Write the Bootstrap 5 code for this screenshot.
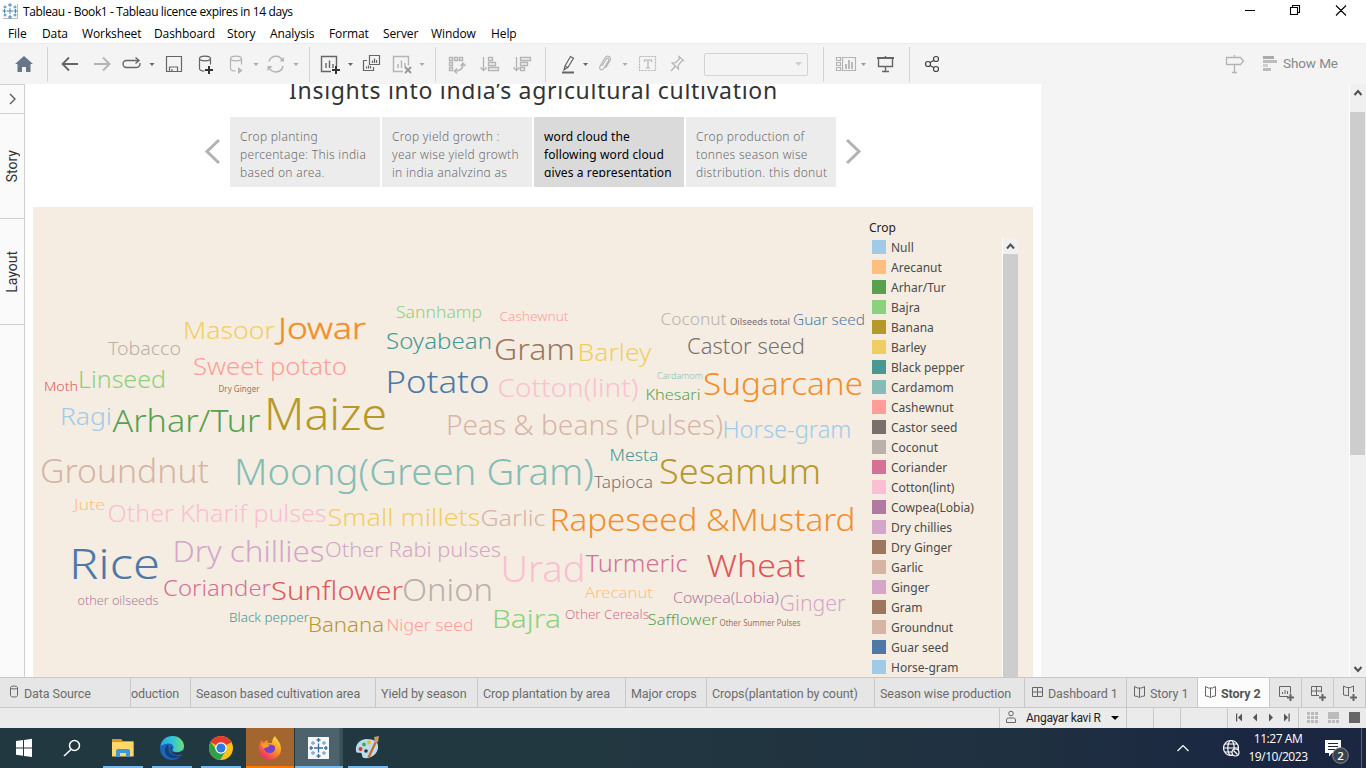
<!DOCTYPE html>
<html lang="en">
<head>
<meta charset="utf-8">
<meta name="viewport" content="width=device-width, initial-scale=1">
<title>Tableau - Book1</title>
<link href="https://cdn.jsdelivr.net/npm/bootstrap@5.3.0/dist/css/bootstrap.min.css" rel="stylesheet">
<style>
html,body{height:100%}
body{width:1366px;height:768px;overflow:hidden;background:#fff;color:#000;font-family:"Open Sans","Noto Sans",sans-serif;font-size:12px;line-height:1}
svg{display:block;flex:none}
button{font:inherit;color:inherit}
.titlebar{height:24px;letter-spacing:-.37px}
.menubar{height:19px;letter-spacing:-.1px}
.menubar a{color:#000;text-decoration:none;display:block;white-space:nowrap}
.toolbar{height:41px;background:#f4f4f4;border-top:1px solid #ececec}
.toolbar button,.taskbar button{background:none;border:0;padding:0}
.toolbar svg{height:40px;fill:none;stroke:#666;stroke-width:1.2}
.toolbar svg.off{stroke:#b4b4b4}
.toolbar .rule{width:1px;height:35px;background:#d4d4d4}
.picker{width:104px;height:23px;border:1px solid #d4d4d4;border-radius:2px;margin:0 15px 0 13px}
.ui{font-family:Roboto,sans-serif}
.workspace{height:593px;background:#f4f4f4}
.rail{width:25px;background:#fafafa;border-right:1px solid #d0d0d0;border-top:1px solid #d0d0d0;font-family:Roboto,sans-serif;font-size:14px;color:#333}
.rail>div{border-bottom:1px solid #d0d0d0}
.rail span{writing-mode:vertical-rl;transform:rotate(180deg)}
.sheet{width:1016px;background:#fff;font-family:"Noto Sans",sans-serif}
.story-title{height:33px;overflow:hidden;font-size:23px;color:#333;font-weight:400;white-space:nowrap}
.story-title div{margin-top:-9px;line-height:30px;letter-spacing:.7px}
.points{height:70px}
.point{width:150px;height:70px;background:#ececec;padding:11px 0 0 10px;margin-right:2px;color:#6c6c6c;font-size:12px;font-weight:300}
.point.on{background:#dadada;color:#000;font-weight:400}
.point div{height:49px;overflow:hidden;line-height:18px;white-space:nowrap;letter-spacing:.3px}
.point.on div{letter-spacing:.1px}
.dash{width:1000px;height:470px;background:#f5ede2;margin:20px 0 0 8px}
.cloud{font-family:"Noto Sans",sans-serif;font-weight:300}
.legend{width:133px;padding-top:12px;color:#4a4a4a;font-size:12px}
.legend h6{font-size:12px;color:#222;margin:0 0 1px;line-height:18px;font-weight:400}
.legend li{height:20px;white-space:nowrap;display:flex;align-items:center}
.legend i{width:14px;height:14px;margin:-2px 5px 0 3px}
.scroller{width:16px;background:#cdcdcd;border-left:1px solid #fff}
.scroller div{background:#f0f0f0}
.vscroll{width:17px;background:#f0f0f0;border-left:1px solid #fff}
.vscroll .thumb{height:343px;background:#cdcdcd;width:15px}
.sheet-tabs{height:31px;background:#e6e6e6;border-top:1px solid #c8c8c8;border-bottom:1px solid #c8c8c8;color:#6c6c6c;font-family:Roboto,sans-serif;font-size:12.5px;letter-spacing:-.08px}
.sheet-tabs>.tab{border-right:1px solid #c8c8c8;height:29px;line-height:31px;color:#6c6c6c;text-decoration:none;white-space:nowrap;overflow:hidden;display:flex;flex:none}
.sheet-tabs>.wks{padding-left:5px}
.sheet-tabs>.on{background:#fcfcfc;font-weight:700;color:#555}
.statusbar{height:20px;background:#ebebeb;font-family:Roboto,sans-serif;color:#222;letter-spacing:-.27px}
.statusbar>div{border-left:1px solid #c8c8c8;height:20px;flex:none}
.taskbar{height:40px;background:linear-gradient(90deg,#223840 0,#223840 40%,#1f3040 75%,#1b2742 92%,#1b2640);color:#fff}
.taskbar button{height:40px;flex:none}
.open{border-bottom:2px solid #76b9ed!important}
</style>
</head>
<body class="d-flex flex-column">
<header>
 <div class="titlebar d-flex align-items-center">
  <svg width="23" height="24" viewBox="0 0 23 24"><path d="M3 18.500H17.500V4" fill="none" stroke="#bbb"/><path d="M10 3v4M8 5h4M10 8v6M7 11h6M10 15v4M8 17h4M2.500 11h4M4.500 9v4M13.500 11h4M15.500 9v4M5 5.500v3M3.500 7h3M15 5.500v3M13.500 7h3M5 13.500v3M3.500 15h3M15 13.500v3M13.500 15h3" stroke="#3f87b5" fill="none"/></svg>
  <span class="flex-grow-1">Tableau - Book1 - Tableau licence expires in 14 days</span>
  <svg width="136" height="24" viewBox="1230 0 136 24" fill="none" stroke="#000" stroke-width="1.100"><path d="M1245 10.500h10M1290.500 7.500h7v7h-7zM1292.500 7v-1.500h7v7h-1.500M1336 5.500l10 10M1346 5.500l-10 10"/></svg>
 </div>
 <nav class="menubar d-flex align-items-center ps-2">
  <a style="width:34px">File</a><a style="width:40px">Data</a><a style="width:72px">Worksheet</a><a style="width:73px">Dashboard</a><a style="width:43px">Story</a><a style="width:59px">Analysis</a><a style="width:54px">Format</a><a style="width:48px">Server</a><a style="width:60px">Window</a><a>Help</a>
 </nav>
</header>
<div class="toolbar d-flex align-items-center">
 <button><svg width="47" viewBox="0 44 47 40"><path d="M24 56l9 8h-2.500v8h-4.500v-5h-4v5h-4.500v-8H15z" fill="#66758a" stroke="none"/></svg></button>
 <div class="rule"></div>
 <button><svg width="38" viewBox="48 44 38 40"><path d="M78 64H63M69 57.500L62.500 64l6.500 6.500" stroke-width="1.800"/></svg></button>
 <button><svg class="off" width="32" viewBox="86 44 32 40"><path d="M94 64h15M103 57.500l6.500 6.500-6.500 6.500" stroke-width="1.800"/></svg></button>
 <button><svg width="44" viewBox="118 44 44 40"><path d="M134 60.500h-7.500a3.500 3.500 0 000 7h10a3.500 3.500 0 003.300-4.500M131 60.500h7.500M135.500 57.500l3.500 3-3.500 3" stroke-width="1.400"/><path d="M149.500 63h5l-2.500 3z" fill="#666" stroke="none"/></svg></button>
 <button><svg width="28" viewBox="162 44 28 40"><path d="M166.500 56.500h15v15h-15zM169.500 71.500v-4.500h8v4.500M172 71v-2"/></svg></button>
 <button><svg width="32" viewBox="190 44 32 40"><ellipse cx="205" cy="58.500" rx="5.500" ry="2.300"/><path d="M199.500 58.500v10c0 1.500 2 2.500 5 2.500M210.500 58.500v6"/><path d="M205 70h8M209 66v8" stroke="#333" stroke-width="2"/></svg></button>
 <button><svg class="off" width="42" viewBox="222 44 42 40"><ellipse cx="236" cy="58.500" rx="5.500" ry="2.300"/><path d="M230.500 58.500v10c0 1.500 2 2.500 5 2.500M241.500 58.500v6"/><path d="M238 67l4.500 3.500-4.500 3.500z" fill="#b4b4b4" stroke="none"/><path d="M253.500 63h5l-2.500 3z" fill="#aaa" stroke="none"/></svg></button>
 <button><svg class="off" width="45" viewBox="264 44 45 40"><path d="M269 61.500a7.200 7.200 0 0113.500-1M283 66a7.200 7.200 0 01-13.500 2" stroke-width="1.500"/><path d="M284 57v4.500h-4.500zM267.500 71v-5h5z" fill="#b4b4b4" stroke="none"/><path d="M293.500 63h5l-2.500 3z" fill="#aaa" stroke="none"/></svg></button>
 <div class="rule"></div>
 <button><svg width="46" viewBox="310 44 46 40"><path d="M331 71.500h-9.500v-15h15v10M326 63v5M329.500 60.500v7.500M333 64v4" stroke-width="1.400"/><path d="M332 70h8M336 66v8" stroke="#333" stroke-width="2"/><path d="M348 63h5l-2.500 3z" fill="#666" stroke="none"/></svg></button>
 <button><svg width="31" viewBox="356 44 31 40"><path d="M369.500 55.500h10v9h-10zM367 60.500h-3.500v10h10v-3.500M372.500 63v-2.500M374.500 63v-4.500M376.500 63v-3M366.500 68.500v-2M368.500 68.500v-3M370.500 68.500v-2.500"/></svg></button>
 <button><svg class="off" width="48" viewBox="387 44 48 40"><path d="M403 71.500h-9.500v-15h15v9M398 64v4M401.500 60.500v7.500M405 63v4" stroke-width="1.400"/><path d="M405 67l6 6M411 67l-6 6" stroke="#999" stroke-width="2"/><path d="M419.500 63h5l-2.500 3z" fill="#aaa" stroke="none"/></svg></button>
 <div class="rule"></div>
 <button><svg class="off" width="38" viewBox="436 44 38 40"><path d="M449.500 57.500h3v3h-3zM454.500 57.500h3v3h-3zM459.500 57.500h3v3h-3zM449.500 62.500h3v3h-3zM449.500 67.500h3v3h-3zM463 63.500c.5 5-3 7.500-8 7.500M460.500 66l2.500-3 2.500 3M457 68.500l-2.500 2.500 2.500 2.500" stroke-width="1.400"/></svg></button>
 <button><svg class="off" width="32" viewBox="474 44 32 40"><path d="M483.500 57v13M480.500 67.500l3 3 3-3M488.500 57.500h4v3h-4zM488.500 62.500h7v3h-7zM488.500 67.500h10v3h-10z" stroke-width="1.300"/></svg></button>
 <button><svg class="off" width="39" viewBox="506 44 39 40"><path d="M516.500 57v13M513.500 67.500l3 3 3-3M520.500 57.500h10v3h-10zM520.500 62.500h7v3h-7zM520.500 67.500h4v3h-4z" stroke-width="1.300"/></svg></button>
 <div class="rule"></div>
 <button><svg width="46" viewBox="546 44 46 40"><path d="M562 72.500h12" stroke-width="2"/><path d="M564 70l1-4 5.500-9.500 3 1.800-5.500 9zM565 66l3 1.800"/><path d="M583 63h5l-2.500 3z" fill="#666" stroke="none"/></svg></button>
 <button><svg class="off" width="40" viewBox="592 44 40 40"><path d="M602 66l4-6.500c1.300-2 3.700-.7 2.600 1.300l-4.800 7.700c-1.700 2.500-5.300.7-3.900-2l5-8.500c2.300-3.500 7-1 5.200 2.500l-4.600 7.500"/><path d="M622.500 63h5l-2.500 3z" fill="#aaa" stroke="none"/></svg></button>
 <button><svg class="off" width="32" viewBox="632 44 32 40"><path d="M639.500 56.500h16v14h-16z" stroke-dasharray="2 1"/><path d="M644.500 62v-2h7v2M648 60v8M646 68h4"/></svg></button>
 <button><svg class="off" width="27" viewBox="664 44 27 40"><path d="M679 56.500l4.500 4-2 .8-3.300 4 .3 3.700-6.500-6 3.700-.3 3.500-3.700zM675 66.500l-4 4.500"/></svg></button>
 <div class="picker d-flex align-items-center justify-content-end pe-1"><svg width="9" style="height:8px" viewBox="0 0 9 8"><path d="M1 2h7L4.500 6z" fill="#d0d0d0" stroke="none"/></svg></div>
 <div class="rule"></div>
 <button><svg class="off" width="46" viewBox="824 44 46 40"><path d="M836.500 57.500h4v3h-4zM836.500 62.500h4v3h-4zM836.500 67.500h4v3h-4zM842.500 57.500h13v13h-13z"/><path d="M846 69v-5M849 69v-9M852 69v-7" stroke-width="1.800"/><path d="M861 63h5l-2.500 3z" fill="#999" stroke="none"/></svg></button>
 <button><svg width="39" viewBox="870 44 39 40"><path d="M877 58h17" stroke-width="2"/><path d="M878.500 59v7.500h14v-7.500M885.500 56v2M885.500 67v4.500M882 71.500h7" stroke-width="1.400"/></svg></button>
 <div class="rule"></div>
 <button><svg width="46" viewBox="910 44 46 40"><g stroke="#444"><circle cx="928" cy="64" r="2.500"/><circle cx="936" cy="59" r="2.500"/><circle cx="936" cy="69" r="2.500"/><path d="M930 62.500l4-2.300M930 65.500l4 2.300"/></g></svg></button>
 <button class="ms-auto"><svg class="off" width="40" viewBox="1215 44 40 40"><path d="M1226.500 57.500h14l3 3.500-3 3.500h-14zM1234.500 55v2.500M1234.500 64.500v8M1232 72.500h5" stroke-width="1.300"/></svg></button>
 <button class="ui d-flex align-items-center" style="width:111px;font-size:13.500px;color:#888;letter-spacing:-.1px"><svg width="28" viewBox="1255 44 28 40"><path d="M1263 56h11v3h-11z" fill="#aaa" stroke="none"/><path d="M1263 60h14v3h-14zM1263 68h8v3h-8z" fill="#bcbcbc" stroke="none"/><path d="M1263 64h5v3h-5z" fill="#d0d0d0" stroke="none"/></svg>Show Me</button>
</div>

<main class="workspace d-flex">
 <aside class="rail d-flex flex-column">
  <div style="height:29px"><svg width="24" height="28"><path d="M10 9l5 5-5 5" fill="none" stroke="#555" stroke-width="1.300"/></svg></div>
  <div class="d-flex align-items-center justify-content-center" style="height:105px"><span>Story</span></div>
  <div class="d-flex align-items-center justify-content-center" style="height:106px"><span>Layout</span></div>
 </aside>
 <section class="sheet">
  <div class="story-title"><div style="margin-left:264px">Insights into india’s agricultural cultivation</div></div>
  <div class="points d-flex" style="margin-left:175px">
   <svg width="30" height="70" viewBox="200 117 30 70" fill="none" stroke="#b2b2b2" stroke-width="3"><path d="M219 140l-12 11.500 12 11.500"/></svg>
   <div class="point"><div>Crop planting<br>percentage: This india<br>based on area.</div></div>
   <div class="point"><div>Crop yield growth :<br>year wise yield growth<br>in india analyzing as</div></div>
   <div class="point on"><div>word cloud the<br>following word cloud<br>gives a representation</div></div>
   <div class="point"><div>Crop production of<br>tonnes season wise<br>distribution. this donut</div></div>
   <svg width="28" height="70" viewBox="838 117 28 70" fill="none" stroke="#b2b2b2" stroke-width="3"><path d="M847 140l12 11.500-12 11.500"/></svg>
  </div>
  <div class="dash d-flex">
   <svg class="cloud" width="836" height="470" viewBox="33 207 836 470">
    <text x="183" y="339" font-size="24" textLength="92" lengthAdjust="spacingAndGlyphs" fill="#f1ce63">Masoor</text>
    <text x="278" y="339" font-size="30" textLength="88" lengthAdjust="spacingAndGlyphs" fill="#f28e2b" stroke="#f28e2b" stroke-width=".4">Jowar</text>
    <text x="108" y="355" font-size="17.500" textLength="73" lengthAdjust="spacingAndGlyphs" fill="#bab0ac">Tobacco</text>
    <text x="193" y="375" font-size="23" textLength="154" lengthAdjust="spacingAndGlyphs" fill="#ff9d9a">Sweet potato</text>
    <text x="78" y="388" font-size="23" textLength="88" lengthAdjust="spacingAndGlyphs" fill="#8cd17d">Linseed</text>
    <text x="44" y="391" font-size="12.500" textLength="34" lengthAdjust="spacingAndGlyphs" fill="#e15759">Moth</text>
    <text x="218.500" y="392" font-size="8.500" textLength="41" lengthAdjust="spacingAndGlyphs" fill="#9d7660" font-weight="400">Dry Ginger</text>
    <text x="60" y="425" font-size="23.500" textLength="52" lengthAdjust="spacingAndGlyphs" fill="#a0cbe8">Ragi</text>
    <text x="112.500" y="432" font-size="32" textLength="148" lengthAdjust="spacingAndGlyphs" fill="#59a14f">Arhar/Tur</text>
    <text x="264" y="430" font-size="43.500" textLength="123" lengthAdjust="spacingAndGlyphs" fill="#b6992d">Maize</text>
    <text x="40" y="483" font-size="33" textLength="169" lengthAdjust="spacingAndGlyphs" fill="#d7b5a6">Groundnut</text>
    <text x="234" y="485" font-size="37" textLength="360" lengthAdjust="spacingAndGlyphs" fill="#86bcb6">Moong(Green Gram)</text>
    <text x="74" y="510" font-size="15" textLength="31" lengthAdjust="spacingAndGlyphs" fill="#ffbe7d">Jute</text>
    <text x="107.500" y="522" font-size="23.500" textLength="219" lengthAdjust="spacingAndGlyphs" fill="#fabfd2">Other Kharif pulses</text>
    <text x="327.500" y="526" font-size="24" textLength="153" lengthAdjust="spacingAndGlyphs" fill="#f1ce63">Small millets</text>
    <text x="69" y="578.500" font-size="43" textLength="91" lengthAdjust="spacingAndGlyphs" fill="#4e79a7">Rice</text>
    <text x="172.500" y="562" font-size="29" textLength="152" lengthAdjust="spacingAndGlyphs" fill="#d4a6c8">Dry chillies</text>
    <text x="325" y="557" font-size="20.500" textLength="176" lengthAdjust="spacingAndGlyphs" fill="#d4a6c8">Other Rabi pulses</text>
    <text x="163" y="596" font-size="22" textLength="108" lengthAdjust="spacingAndGlyphs" fill="#d37295">Coriander</text>
    <text x="271" y="600" font-size="26" textLength="132" lengthAdjust="spacingAndGlyphs" fill="#e15759">Sunflower</text>
    <text x="402" y="601" font-size="31" textLength="91" lengthAdjust="spacingAndGlyphs" fill="#bab0ac">Onion</text>
    <text x="77.500" y="605" font-size="12" textLength="81" lengthAdjust="spacingAndGlyphs" fill="#b07aa1">other oilseeds</text>
    <text x="229" y="622" font-size="12.500" textLength="80" lengthAdjust="spacingAndGlyphs" fill="#499894">Black pepper</text>
    <text x="308" y="632" font-size="20.500" textLength="76" lengthAdjust="spacingAndGlyphs" fill="#b6992d">Banana</text>
    <text x="386.500" y="631" font-size="16.500" textLength="87" lengthAdjust="spacingAndGlyphs" fill="#ff9d9a">Niger seed</text>
    <text x="396" y="318" font-size="16" textLength="86" lengthAdjust="spacingAndGlyphs" fill="#8cd17d">Sannhamp</text>
    <text x="386" y="349" font-size="22" textLength="106" lengthAdjust="spacingAndGlyphs" fill="#499894">Soyabean</text>
    <text x="385.500" y="392.500" font-size="31" textLength="104" lengthAdjust="spacingAndGlyphs" fill="#4e79a7">Potato</text>
    <text x="499.500" y="321" font-size="12.500" textLength="69" lengthAdjust="spacingAndGlyphs" fill="#ff9d9a">Cashewnut</text>
    <text x="494" y="360" font-size="30" textLength="81" lengthAdjust="spacingAndGlyphs" fill="#9d7660">Gram</text>
    <text x="577.500" y="361" font-size="23" textLength="74" lengthAdjust="spacingAndGlyphs" fill="#f1ce63">Barley</text>
    <text x="497.500" y="397" font-size="25" textLength="141" lengthAdjust="spacingAndGlyphs" fill="#fabfd2">Cotton(lint)</text>
    <text x="660.500" y="325" font-size="16" textLength="66" lengthAdjust="spacingAndGlyphs" fill="#bab0ac">Coconut</text>
    <text x="730" y="325" font-size="9" textLength="60" lengthAdjust="spacingAndGlyphs" fill="#79706e" font-weight="400">Oilseeds total</text>
    <text x="793" y="325" font-size="15" textLength="72" lengthAdjust="spacingAndGlyphs" fill="#4e79a7">Guar seed</text>
    <text x="687" y="354" font-size="21.500" textLength="118" lengthAdjust="spacingAndGlyphs" fill="#79706e">Castor seed</text>
    <text x="657" y="379" font-size="9.500" textLength="46" lengthAdjust="spacingAndGlyphs" fill="#86bcb6">Cardamom</text>
    <text x="645.500" y="400" font-size="15" textLength="55" lengthAdjust="spacingAndGlyphs" fill="#59a14f">Khesari</text>
    <text x="703" y="395" font-size="31.500" textLength="160" lengthAdjust="spacingAndGlyphs" fill="#f28e2b">Sugarcane</text>
    <text x="446" y="435" font-size="27" textLength="277" lengthAdjust="spacingAndGlyphs" fill="#d7b5a6">Peas &amp; beans (Pulses)</text>
    <text x="722.500" y="438" font-size="23" textLength="129" lengthAdjust="spacingAndGlyphs" fill="#a0cbe8">Horse-gram</text>
    <text x="609.500" y="461" font-size="15.500" textLength="49" lengthAdjust="spacingAndGlyphs" fill="#499894">Mesta</text>
    <text x="594" y="488" font-size="15.500" textLength="59" lengthAdjust="spacingAndGlyphs" fill="#79706e">Tapioca</text>
    <text x="659" y="484" font-size="34" textLength="162" lengthAdjust="spacingAndGlyphs" fill="#b6992d">Sesamum</text>
    <text x="480.500" y="526" font-size="22" textLength="65" lengthAdjust="spacingAndGlyphs" fill="#d7b5a6">Garlic</text>
    <text x="549.500" y="531" font-size="32" textLength="306" lengthAdjust="spacingAndGlyphs" fill="#f28e2b">Rapeseed &amp;Mustard</text>
    <text x="500.500" y="581.500" font-size="37" textLength="85" lengthAdjust="spacingAndGlyphs" fill="#fabfd2">Urad</text>
    <text x="585.500" y="572" font-size="23" textLength="102" lengthAdjust="spacingAndGlyphs" fill="#d37295">Turmeric</text>
    <text x="706.500" y="577" font-size="31.500" textLength="99" lengthAdjust="spacingAndGlyphs" fill="#e15759">Wheat</text>
    <text x="585" y="598" font-size="15" textLength="68" lengthAdjust="spacingAndGlyphs" fill="#ffbe7d">Arecanut</text>
    <text x="673" y="603" font-size="14.500" textLength="106" lengthAdjust="spacingAndGlyphs" fill="#b07aa1">Cowpea(Lobia)</text>
    <text x="779.500" y="611" font-size="21" textLength="66" lengthAdjust="spacingAndGlyphs" fill="#d4a6c8">Ginger</text>
    <text x="492" y="628" font-size="26.500" textLength="69" lengthAdjust="spacingAndGlyphs" fill="#8cd17d">Bajra</text>
    <text x="565" y="619" font-size="12.500" textLength="84" lengthAdjust="spacingAndGlyphs" fill="#d37295">Other Cereals</text>
    <text x="647.500" y="625" font-size="14.500" textLength="70" lengthAdjust="spacingAndGlyphs" fill="#59a14f">Safflower</text>
    <text x="719.500" y="626" font-size="8.300" textLength="81" lengthAdjust="spacingAndGlyphs" fill="#9d7660" font-weight="400">Other Summer Pulses</text>
   </svg>
   <div class="legend overflow-hidden">
    <h6>Crop</h6>
    <ul class="list-unstyled m-0">
     <li><i style="background:#a0cbe8"></i>Null</li><li><i style="background:#ffbe7d"></i>Arecanut</li><li><i style="background:#59a14f"></i>Arhar/Tur</li><li><i style="background:#8cd17d"></i>Bajra</li><li><i style="background:#b6992d"></i>Banana</li><li><i style="background:#f1ce63"></i>Barley</li><li><i style="background:#499894"></i>Black pepper</li><li><i style="background:#86bcb6"></i>Cardamom</li><li><i style="background:#ff9d9a"></i>Cashewnut</li><li><i style="background:#79706e"></i>Castor seed</li><li><i style="background:#bab0ac"></i>Coconut</li><li><i style="background:#d37295"></i>Coriander</li><li><i style="background:#fabfd2"></i>Cotton(lint)</li><li><i style="background:#b07aa1"></i>Cowpea(Lobia)</li><li><i style="background:#d4a6c8"></i>Dry chillies</li><li><i style="background:#9d7660"></i>Dry Ginger</li><li><i style="background:#d7b5a6"></i>Garlic</li><li><i style="background:#d4a6c8"></i>Ginger</li><li><i style="background:#9d7660"></i>Gram</li><li><i style="background:#d7b5a6"></i>Groundnut</li><li><i style="background:#4e79a7"></i>Guar seed</li><li><i style="background:#a0cbe8"></i>Horse-gram</li>
    </ul>
   </div>
   <div class="scroller" style="margin-top:31px"><div><svg width="15" height="16"><path d="M4 10.500l3.500-4 3.500 4" fill="none" stroke="#505050" stroke-width="2"/></svg></div></div>
  </div>
 </section>
 <div class="vscroll ms-auto d-flex flex-column">
  <svg width="16" height="28"><path d="M4.500 11l3.500-4 3.500 4" fill="none" stroke="#505050" stroke-width="2"/></svg>
  <div class="thumb"></div>
  <svg class="mt-auto" width="16" height="17"><path d="M4.500 7l3.500 4 3.500-4" fill="none" stroke="#505050" stroke-width="2"/></svg>
 </div>
</main>

<nav class="sheet-tabs d-flex">
 <a class="tab" style="width:131px"><svg width="24" height="29" viewBox="0 678 24 29" fill="none" stroke="#666"><ellipse cx="14" cy="687.500" rx="3.500" ry="1.500"/><path d="M10.500 687.500v8c0 2 7 2 7 0v-8"/></svg>Data Source</a>
 <a class="tab" style="width:60px">oduction</a>
 <a class="tab wks" style="width:185px">Season based cultivation area</a>
 <a class="tab wks" style="width:102px">Yield by season</a>
 <a class="tab wks" style="width:148px">Crop plantation by area</a>
 <a class="tab wks" style="width:81px">Major crops</a>
 <a class="tab wks" style="width:168px">Crops(plantation by count)</a>
 <a class="tab wks" style="width:150px">Season wise production</a>
 <a class="tab" style="width:102px"><svg width="23" height="29" viewBox="1025 678 23 29" fill="none" stroke="#666"><path d="M1032.500 687.500h10v9h-10zM1037.500 687.500v9M1032.500 692h10"/></svg>Dashboard 1</a>
 <a class="tab" style="width:71px"><svg width="23" height="29" viewBox="1127 678 23 29" fill="none" stroke="#666"><path id="book" d="M1134.500 686.500l3 1.500h4l3-1.500v9.500l-3.500.500-1.500 1.500-1.500-1.500-3.500-.500zM1139.500 688v9"/></svg>Story 1</a>
 <a class="tab on" style="width:72px"><svg width="23" height="29" viewBox="1127 678 23 29" fill="none" stroke="#666"><use href="#book"/></svg>Story 2</a>
 <a class="tab" style="width:32px"><svg width="31" height="29" viewBox="1270 678 31 29" fill="none" stroke="#666"><path d="M1288 696.500h-8.500v-10h11v7M1282.500 694v-2M1285 694v-4M1287.500 694v-3"/><path d="M1287 697.500h7M1290.500 694v7" stroke-width="2"/></svg></a>
 <a class="tab" style="width:32px"><svg width="31" height="29" viewBox="1302 678 31 29" fill="none" stroke="#666"><path d="M1319 695.500h-7.500v-9h10v6M1316.500 686.500v9M1311.500 691h10"/><path d="M1319 697.500h7M1322.500 694v7" stroke-width="2"/></svg></a>
 <a class="tab" style="width:32px"><svg width="31" height="29" viewBox="1334 678 31 29" fill="none" stroke="#666"><path d="M1349 696l-1.500-.5-4-.5v-9l3 1.500h4l3-1.500v6M1348.500 688v8"/><path d="M1350 697.500h7M1353.500 694v7" stroke-width="2"/></svg></a>
</nav>
<div class="statusbar d-flex">
 <div class="ms-auto d-flex align-items-center" style="width:127px"><svg width="26" height="20" viewBox="1000 708 26 20" fill="none" stroke="#666"><circle cx="1011" cy="713.500" r="2.300"/><path d="M1006.500 722.500v-2.500q0-2 2-2h5q2 0 2 2v2.500z"/></svg>Angayar kavi R<svg class="ms-auto me-1" width="14" height="20" viewBox="0 0 14 20"><path d="M3 8h8l-4 4z"/></svg></div>
 <div style="width:27px"></div><div style="width:27px"></div><div style="width:47px"></div>
 <div style="width:71px"><svg width="70" height="20" viewBox="1228 708 70 20" fill="#555"><path d="M1236 713.500h1.200v8h-1.200zM1242 713.500v8l-4-4zM1257 713.500v8l-4-4zM1269 713.500v8l4-4zM1284 713.500v8l4-4zM1288.500 713.500h1.200v8h-1.200z"/></svg></div>
 <div style="width:68px"><svg width="67" height="20" viewBox="1299 708 67 20" fill="#bbb"><path d="M1307 712h3v3h-3zM1311 712h3v3h-3zM1315 712h3v3h-3zM1307 716h3v3h-3zM1311 716h3v3h-3zM1315 716h3v3h-3zM1307 720h3v3h-3zM1311 720h3v3h-3zM1315 720h3v3h-3zM1328 712h11v7h-11zM1328 720h3v3h-3zM1332 720h3v3h-3zM1336 720h3v3h-3z"/><path d="M1349 712h11v11h-11z" fill="#666"/></svg></div>
</div>
<footer class="taskbar d-flex">
 <button><svg width="48" height="40" viewBox="0 728 48 40" fill="#fff"><path d="M16 741l7-1v7.500h-7zM24 739.900l8-1.100v8.700h-8zM16 748.500h7v7.300l-7-1zM24 748.500h8v8.500l-8-1.100z"/></svg></button>
 <button><svg width="55" height="40" viewBox="48 728 55 40" fill="none" stroke="#fff" stroke-width="1.500"><circle cx="74.500" cy="745.500" r="5"/><path d="M71 749.500l-7 6.500"/></svg></button>
 <button class="open"><svg width="40" height="38" viewBox="103 728 40 38"><path d="M112 739h9l2 2h10.500v15H112z" fill="#d79b15"/><path d="M112 742h21.500v14.500H112z" fill="#ffd868"/><path d="M116 757v-6q0-2 2-2h10q2 0 2 2v6h-4v-4h-6v4z" fill="#3d97d8"/></svg></button>
 <button class="open" style="margin-left:9px"><svg width="40" height="38" viewBox="152 728 40 38"><defs><linearGradient id="eg" x2="1"><stop stop-color="#27a9e0"/><stop offset=".55" stop-color="#35c6d0"/><stop offset="1" stop-color="#6de070"/></linearGradient></defs><circle cx="172" cy="748" r="12" fill="#1b66b8"/><path d="M160.500 746c1-6 6-10 12-10 7 0 11.500 5 11.500 10 0 4-3.500 6-7 6-3 0-5-1-4-2.500 2-3-1-6-4-6-4 0-7 1.500-8.500 2.500z" fill="url(#eg)"/><path d="M168 744.500c-4 2-4 9 0 12 4 3 10 2 13.500-1-4 1-10 0-12-3-1.500-3-.5-6-1.500-8z" fill="#123f7e"/><path d="M171 746c2 2-1 4 1 5.500 3 2 8 .8 10.500-.8l1.800.3-1 3c-5 2-12 1-13-4z" fill="#223840"/></svg></button>
 <button class="open" style="margin-left:9px"><svg width="40" height="38" viewBox="201 728 40 38"><circle cx="221" cy="748" r="12" fill="#fbc116"/><path d="M221 748L210.600 742a12 12 0 0120.800 0z" fill="#e33b2e"/><path d="M210.600 742A12 12 0 00220 760l6-9.500h-9z" fill="#2ea14b"/><path d="M221 742h10.400l-1 1-9 2z" fill="#e33b2e"/><circle cx="221" cy="748" r="5.800" fill="#fff"/><circle cx="221" cy="748" r="4.500" fill="#2c7be5"/></svg></button>
 <button style="margin-left:5px;background:#a4662f;border-bottom:2px solid #ff7800"><svg width="48" height="38" viewBox="246 728 48 38"><defs><linearGradient id="fx" x1="1" y1="0" x2=".2" y2="1"><stop stop-color="#fff34a"/><stop offset=".45" stop-color="#ff9a22"/><stop offset="1" stop-color="#f0226c"/></linearGradient></defs><path d="M275 736c1 3 6 6 6 13 0 6-5 10.500-11 10.500S259 755 259 749c0-4 1-6 3-9l1 3 4-3 1 3 4 0c0-3 1-5 3-7z" fill="url(#fx)"/><path d="M264 747c2-3 6-3 9-2 4 2 2 8-3 8-3 0-6-2-6-6z" fill="#7542c8"/><path d="M261 744c4-2 6 1 9 1l-2 2c-2 0-3 2-5 1z" fill="#ff9a22"/></svg></button>
 <button class="open" style="margin-left:1px;background:#4e626b"><svg width="48" height="38" viewBox="295 728 48 38"><path d="M339.500 728h3.500v38h-3.500z" fill="#3b4f57"/><path d="M308 737h21v22h-21z" fill="#f5f6f7"/><g stroke="#3a6f9d" stroke-width="1.300"><path d="M318.500 743.500v9M314 748h9M318.500 738v4M316.500 740h4M318.500 754v4M316.500 756h4M309.500 748h3.500M311 746v4M324 748h3.500M326 746v4"/><path d="M313 741v4M311 743h4M324 741v4M322 743h4M313 751v4M311 753h4M324 751v4M322 753h4" stroke="#80aac5"/></g></svg></button>
 <button class="open" style="margin-left:5px"><svg width="40" height="38" viewBox="348 728 40 38"><path d="M356 751c-1-7 4-12 11-12 7 0 12 3 11 9-1 7-8 11-14 10-3-1-1-4-3-5-2-1-4 1-5-2z" fill="#b9dcee"/><circle cx="360.500" cy="749" r="2" fill="#e0342d"/><circle cx="364" cy="744.500" r="2" fill="#4caf3d"/><circle cx="369" cy="742.500" r="2" fill="#f3b81f"/><circle cx="366" cy="751" r="1.800" fill="#223840"/><path d="M375 741l-7.500 16 2 1 7.500-16z" fill="#d2691e"/><path d="M374 737l5-1-1 6-3 1z" fill="#c99a6b"/></svg></button>
 <div class="ms-auto d-flex align-items-center">
  <svg width="70" height="40" viewBox="1176 728 70 40" fill="none" stroke="#fff" stroke-width="1.200"><path d="M1177.500 751l5.500-5.500 5.500 5.500"/><circle cx="1231" cy="748" r="7.500"/><ellipse cx="1231" cy="748" rx="3.200" ry="7.500"/><path d="M1223.500 748h15M1225 744h12M1225 752h12"/><circle cx="1235.500" cy="752.500" r="3.500" fill="#1c2a40"/><path d="M1233.500 750.500l4 4"/></svg>
  <div class="text-center" style="width:64px;line-height:18px;letter-spacing:-.45px">11:27 AM<br>19/10/2023</div>
  <svg width="56" height="40" viewBox="1310 728 56 40"><path d="M1325 740h16v13h-9l-3 3.500v-3.500h-4z" fill="#fff"/><path d="M1328 743.500h10M1328 746.500h10M1328 749.500h7" stroke="#1b2742"/><circle cx="1340.500" cy="755.500" r="7.800" fill="#3b4049" stroke="#8c9096"/><text x="1340.500" y="759.500" font-size="11.500" font-weight="600" text-anchor="middle" fill="#fff">2</text><path d="M1361.500 728v40" stroke="#596278"/></svg>
 </div>
</footer>
<script src="https://cdn.jsdelivr.net/npm/bootstrap@5.3.0/dist/js/bootstrap.bundle.min.js"></script>
</body>
</html>
